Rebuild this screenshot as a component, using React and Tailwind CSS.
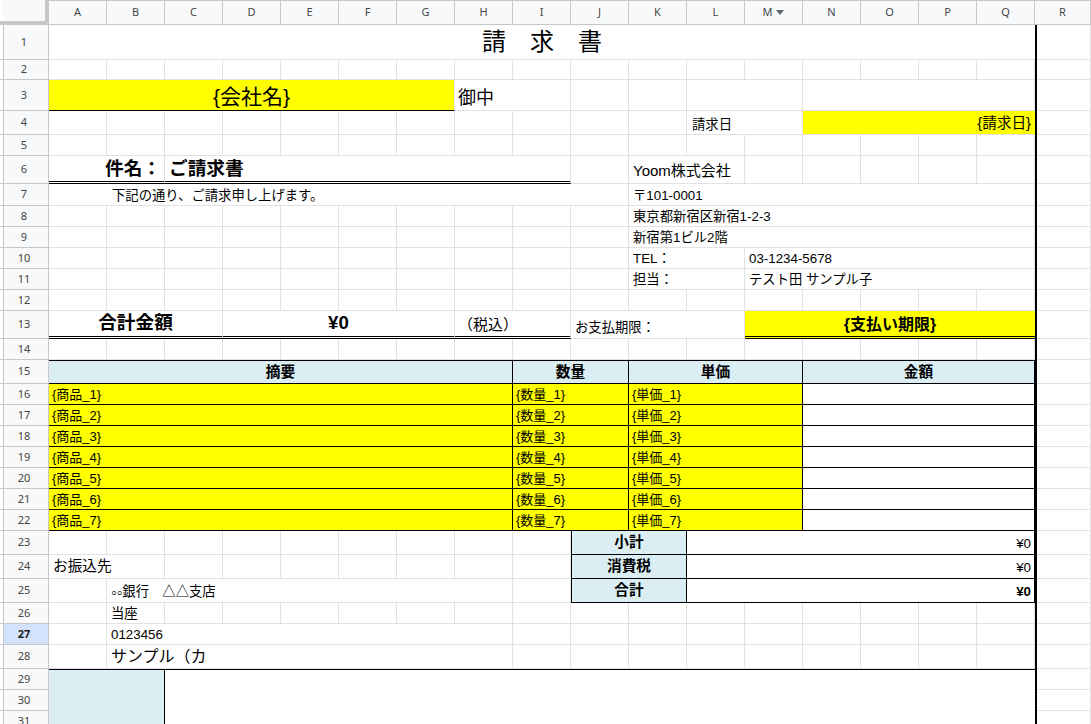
import React from "react";

const COLS = ["A", "B", "C", "D", "E", "F", "G", "H", "I", "J", "K", "L", "M", "N", "O", "P", "Q", "R"];
const ROWS = Array.from({ length: 31 }, (_, i) => i + 1);

// same track sizes for the gridline layer and the content layer
const GRID =
  "grid grid-cols-[49px_repeat(17,58px)_56px] grid-rows-[25px_35px_20px_31px_24px_21px_28px_22px_21px_21px_21px_21px_21px_28px_21px_24px_21px_21px_21px_21px_21px_21px_21px_24px_24px_24px_21px_21px_24px_21px_21px_21px]";

const plain = "bg-white border-r border-b border-[#e2e2e2] items-end pb-[3px] px-[3px] text-[13.33px]";
const yellowRow = "bg-[#ffff00] border-r border-b border-black items-end pb-[3px] px-[3px] text-[13px]";
const blueHead = "bg-[#daeef3] border-r border-b border-black items-center justify-center font-bold text-[14.67px]";

function Cell({ at, className = "", children }) {
  return (
    <div className={`${at} flex min-w-0 overflow-hidden whitespace-nowrap leading-none ${className}`}>
      {children}
    </div>
  );
}

const items = [
  { row: "row-[17]", n: 1 },
  { row: "row-[18]", n: 2 },
  { row: "row-[19]", n: 3 },
  { row: "row-[20]", n: 4 },
  { row: "row-[21]", n: 5 },
  { row: "row-[22]", n: 6 },
  { row: "row-[23]", n: 7 },
];

function GridLines() {
  return (
    <div className={`${GRID} col-start-1 row-start-1`}>
      <div className="bg-[#f8f9fa] border-r-4 border-b-4 border-[#c7c7c7] shadow-[inset_3px_0_0_#ffffff]" />
      {COLS.map((c) => (
        <div
          key={c}
          className="flex items-center justify-center gap-[4px] bg-[#f8f9fa] border-t border-r border-b border-[#c7c7c7] text-[11px] text-[#444746]"
        >
          {c}
          {c === "M" && (
            <svg width="8" height="5" viewBox="0 0 8 5">
              <path d="M0 0h8L4 5z" fill="#5f6368" />
            </svg>
          )}
        </div>
      ))}
      {ROWS.map((r) => (
        <React.Fragment key={r}>
          <div
            className={`flex items-center justify-center border-r border-b border-[#c7c7c7] text-[11px] shadow-[inset_3px_0_0_#ffffff,inset_4px_0_0_#c7c7c7] ${
              r === 27 ? "bg-[#d3e3fd] font-bold text-[#1f1f1f]" : "bg-[#f8f9fa] text-[#444746]"
            }`}
          >
            {r}
          </div>
          {COLS.map((c) => (
            <div key={c} className="bg-white border-r border-b border-[#e2e2e2]" />
          ))}
        </React.Fragment>
      ))}
    </div>
  );
}

function Sheet() {
  return (
    <div className={`${GRID} col-start-1 row-start-1 font-['Liberation_Sans','Noto_Sans_CJK_JP',sans-serif] text-black`}>
      {/* row 1 */}
      <Cell at="col-[2/19] row-[2]" className="bg-white border-b border-[#e2e2e2] items-center justify-center text-[24px]">
        請　求　書
      </Cell>

      {/* row 3 */}
      <Cell at="col-[2/9] row-[4]" className="bg-[#ffff00] border-r border-b border-[#e2e2e2] border-b-black items-end justify-center pb-[3px] text-[21px]">
        {"{会社名}"}
      </Cell>
      <Cell at="col-[9/11] row-[4]" className={`${plain} text-[18px] pb-[3px]`}>
        御中
      </Cell>
      <Cell at="col-[13/15] row-[4]" className={plain} />
      <Cell at="col-[15/19] row-[4]" className={plain} />

      {/* row 4 */}
      <Cell at="col-[13/15] row-[5]" className={`${plain} pl-[5px]`}>
        請求日
      </Cell>
      <Cell at="col-[15/19] row-[5]" className="bg-[#ffff00] border-b border-[#e2e2e2] items-end justify-end pb-[3px] pr-[4px] text-[14.67px]">
        {"{請求日}"}
      </Cell>

      {/* row 6 */}
      <Cell at="col-[2/4] row-[7]" className="bg-white border-r border-[#e2e2e2] border-b-[3px] border-double border-b-black items-end justify-end pb-[2px] pr-[3px] font-bold text-[18.67px]">
        件名：
      </Cell>
      <Cell at="col-[4/11] row-[7]" className="bg-white border-r border-[#e2e2e2] border-b-[3px] border-double border-b-black items-end pb-[2px] pl-[4px] font-bold text-[18.67px]">
        ご請求書
      </Cell>
      <Cell at="col-[12/14] row-[7]" className={`${plain} text-[15px] pb-[5px] pl-[4px]`}>
        Yoom株式会社
      </Cell>

      {/* row 7 - 11 */}
      <Cell at="col-[2/12] row-[8]" className={`${plain} pl-[63px]`}>
        下記の通り、ご請求申し上げます。
      </Cell>
      <Cell at="col-[12/19] row-[8]" className={`${plain} pl-[4px]`}>
        〒101-0001
      </Cell>
      <Cell at="col-[12/19] row-[9]" className={`${plain} pl-[4px]`}>
        東京都新宿区新宿1-2-3
      </Cell>
      <Cell at="col-[12/19] row-[10]" className={`${plain} pl-[4px]`}>
        新宿第1ビル2階
      </Cell>
      <Cell at="col-[12/14] row-[11]" className={`${plain} pl-[4px]`}>
        TEL：
      </Cell>
      <Cell at="col-[14/19] row-[11]" className={`${plain} pl-[4px]`}>
        03-1234-5678
      </Cell>
      <Cell at="col-[12/14] row-[12]" className={`${plain} pl-[4px]`}>
        担当：
      </Cell>
      <Cell at="col-[14/19] row-[12]" className={`${plain} pl-[4px]`}>
        テスト田 サンプル子
      </Cell>

      {/* row 13 */}
      <Cell at="col-[2/5] row-[14]" className="bg-white border-r border-[#e2e2e2] border-b-[3px] border-double border-b-black items-end justify-center pb-[3px] font-bold text-[18.67px]">
        合計金額
      </Cell>
      <Cell at="col-[5/9] row-[14]" className="bg-white border-r border-[#e2e2e2] border-b-[3px] border-double border-b-black items-end justify-center pb-[3px] font-bold text-[18.67px]">
        ¥0
      </Cell>
      <Cell at="col-[9/11] row-[14]" className="bg-white border-r border-[#e2e2e2] border-b-[3px] border-double border-b-black items-end pb-[4px] pl-[3px] text-[15px]">
        （税込）
      </Cell>
      <Cell at="col-[11/14] row-[14]" className={`${plain} pl-[4px] pb-[4px]`}>
        お支払期限：
      </Cell>
      <Cell at="col-[14/19] row-[14]" className="bg-[#ffff00] border-b-[3px] border-double border-b-black items-end justify-center pb-[3px] font-bold text-[16px]">
        {"{支払い期限}"}
      </Cell>

      {/* table head */}
      <Cell at="col-[2/10] row-[16]" className={`${blueHead} border-t`}>
        摘要
      </Cell>
      <Cell at="col-[10/12] row-[16]" className={`${blueHead} border-t`}>
        数量
      </Cell>
      <Cell at="col-[12/15] row-[16]" className={`${blueHead} border-t`}>
        単価
      </Cell>
      <Cell at="col-[15/19] row-[16]" className={`${blueHead} border-t`}>
        金額
      </Cell>

      {/* table body */}
      {items.map((it) => (
        <React.Fragment key={it.n}>
          <Cell at={`col-[2/10] ${it.row}`} className={yellowRow}>
            {`{商品_${it.n}}`}
          </Cell>
          <Cell at={`col-[10/12] ${it.row}`} className={yellowRow}>
            {`{数量_${it.n}}`}
          </Cell>
          <Cell at={`col-[12/15] ${it.row}`} className={yellowRow}>
            {`{単価_${it.n}}`}
          </Cell>
          <Cell at={`col-[15/19] ${it.row}`} className="bg-white border-r border-b border-black" />
        </React.Fragment>
      ))}

      {/* totals */}
      <Cell at="col-[11/13] row-[24]" className={`${blueHead} border-l`}>
        小計
      </Cell>
      <Cell at="col-[13/19] row-[24]" className="bg-white border-r border-b border-black items-end justify-end pb-[4px] pr-[3px] text-[13.33px]">
        ¥0
      </Cell>
      <Cell at="col-[11/13] row-[25]" className={`${blueHead} border-l`}>
        消費税
      </Cell>
      <Cell at="col-[13/19] row-[25]" className="bg-white border-r border-b border-black items-end justify-end pb-[4px] pr-[3px] text-[13.33px]">
        ¥0
      </Cell>
      <Cell at="col-[11/13] row-[26]" className={`${blueHead} border-l`}>
        合計
      </Cell>
      <Cell at="col-[13/19] row-[26]" className="bg-white border-r border-b border-black items-end justify-end pb-[4px] pr-[3px] font-bold text-[13.33px]">
        ¥0
      </Cell>

      {/* bank */}
      <Cell at="col-[2/4] row-[25]" className={`${plain} pl-[4px] pb-[4px] text-[14.67px]`}>
        お振込先
      </Cell>
      <Cell at="col-[3/10] row-[26]" className={`${plain} pl-[4px]`}>
        <span>
          <span className="inline-block translate-y-[2px] text-[16px]">◦◦</span>銀行　△△支店
        </span>
      </Cell>
      <Cell at="col-[3/4] row-[27]" className={`${plain} pl-[4px]`}>
        当座
      </Cell>
      <Cell at="col-[3/10] row-[28]" className={`${plain} pl-[4px]`}>
        0123456
      </Cell>
      <Cell at="col-[3/10] row-[29]" className={`${plain} pl-[4px] text-[16px]`}>
        サンプル（カ
      </Cell>

      {/* bottom block */}
      <Cell at="col-[2/4] row-[30/33]" className="bg-[#daeef3] border-t border-r border-black" />
      <Cell at="col-[4/19] row-[30/33]" className="bg-white border-t border-black" />

      {/* thick right edge of the print area */}
      <div className="col-[19/20] row-[2/33] border-l-2 border-black" />
    </div>
  );
}

export default function App() {
  return (
    <div className="grid h-[724px] w-[1091px] overflow-hidden bg-white">
      <GridLines />
      <Sheet />
    </div>
  );
}
